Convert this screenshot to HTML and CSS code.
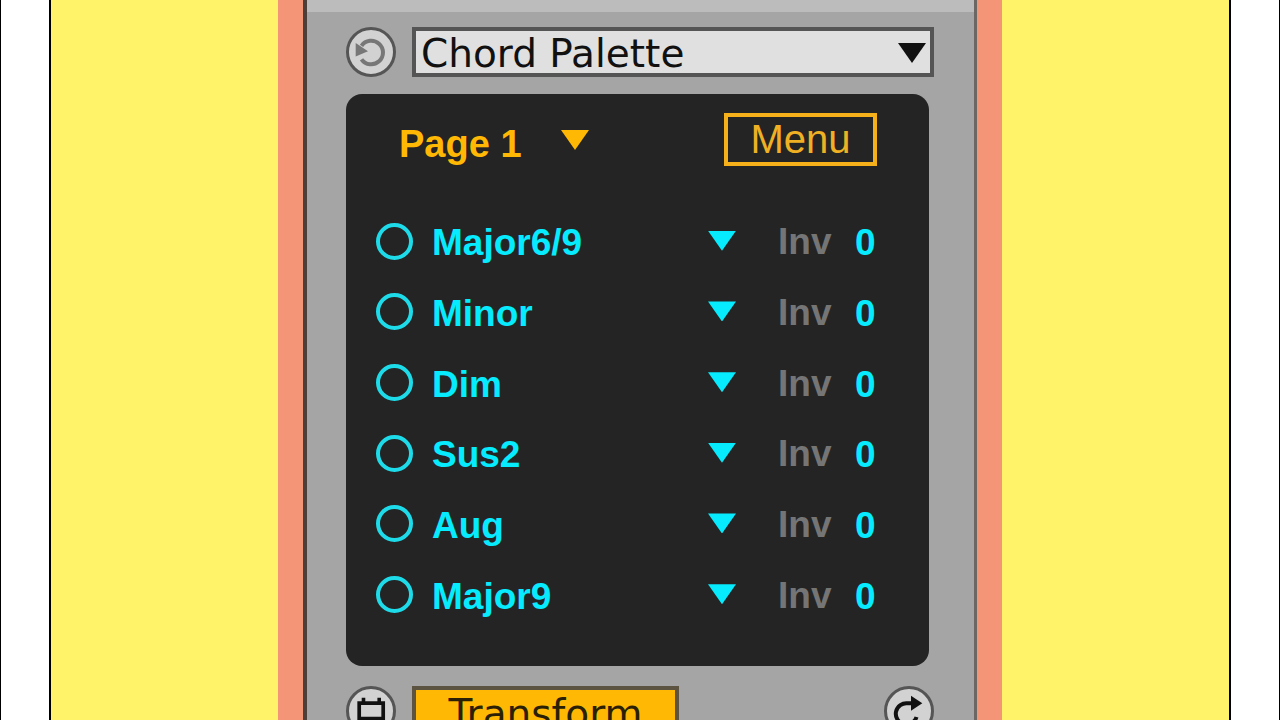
FILE: index.html
```html
<!DOCTYPE html>
<html lang="en">
<head>
<meta charset="utf-8">
<meta name="viewport" content="width=device-width, initial-scale=1">
<title>Chord Palette</title>
<link rel="stylesheet" href="styles.css">
</head>
<body>
<div class="stage">
  <main class="frame">
    <div class="device">
      <div class="titlebar"></div>
      <div class="content">
        <div class="toolbar">
          <button class="round" type="button" aria-label="Reset">
            <svg class="icon muted" viewBox="0 0 50 50" aria-hidden="true">
              <path d="M15.5 18.8A11.8 11.8 0 1 1 15.5 32.3" fill="none" stroke="currentColor" stroke-width="4"/>
              <path d="M9.7 16V29.5L22 24.3Z" fill="currentColor"/>
            </svg>
          </button>
          <div class="picker device-picker">
            <select aria-label="Device"><option>Chord Palette</option></select>
          </div>
        </div>

        <section class="panel">
          <div class="panel-head">
            <div class="picker page-picker">
              <select aria-label="Page"><option>Page 1</option></select>
            </div>
            <button class="menu" type="button">Menu</button>
          </div>
          <div class="chords">
            <div class="chord">
              <input class="dot" type="radio" name="chord" aria-label="Play Major6/9">
              <div class="picker"><select aria-label="Chord 1"><option>Major6/9</option></select></div>
              <label class="inv" for="inv1">Inv</label>
              <input class="value" id="inv1" type="text" inputmode="numeric" value="0">
            </div>
            <div class="chord">
              <input class="dot" type="radio" name="chord" aria-label="Play Minor">
              <div class="picker"><select aria-label="Chord 2"><option>Minor</option></select></div>
              <label class="inv" for="inv2">Inv</label>
              <input class="value" id="inv2" type="text" inputmode="numeric" value="0">
            </div>
            <div class="chord">
              <input class="dot" type="radio" name="chord" aria-label="Play Dim">
              <div class="picker"><select aria-label="Chord 3"><option>Dim</option></select></div>
              <label class="inv" for="inv3">Inv</label>
              <input class="value" id="inv3" type="text" inputmode="numeric" value="0">
            </div>
            <div class="chord">
              <input class="dot" type="radio" name="chord" aria-label="Play Sus2">
              <div class="picker"><select aria-label="Chord 4"><option>Sus2</option></select></div>
              <label class="inv" for="inv4">Inv</label>
              <input class="value" id="inv4" type="text" inputmode="numeric" value="0">
            </div>
            <div class="chord">
              <input class="dot" type="radio" name="chord" aria-label="Play Aug">
              <div class="picker"><select aria-label="Chord 5"><option>Aug</option></select></div>
              <label class="inv" for="inv5">Inv</label>
              <input class="value" id="inv5" type="text" inputmode="numeric" value="0">
            </div>
            <div class="chord">
              <input class="dot" type="radio" name="chord" aria-label="Play Major9">
              <div class="picker"><select aria-label="Chord 6"><option>Major9</option></select></div>
              <label class="inv" for="inv6">Inv</label>
              <input class="value" id="inv6" type="text" inputmode="numeric" value="0">
            </div>
          </div>
        </section>

        <div class="toolbar">
          <button class="round" type="button" aria-label="Clip">
            <svg class="icon" viewBox="0 0 50 50" aria-hidden="true">
              <path d="M13.2 17.2H37.2V32.5H13.2Z" fill="none" stroke="currentColor" stroke-width="3.7"/>
              <path d="M15.7 11.7h3.6v5h-3.6zM31.4 11.7h3.6v5h-3.6z" fill="currentColor"/>
            </svg>
          </button>
          <button class="transform" type="button">Transform</button>
          <button class="round last" type="button" aria-label="Apply again">
            <svg class="icon" viewBox="0 0 50 50" aria-hidden="true">
              <path d="M28 17.3H24A10.6 10.6 0 1 0 32.5 31" fill="none" stroke="currentColor" stroke-width="4"/>
              <path d="M27 9.7L38.3 17.3L27 24.7Z" fill="currentColor"/>
            </svg>
          </button>
        </div>
      </div>
    </div>
  </main>
</div>
</body>
</html>
```
FILE: styles.css
```css
* {
  box-sizing: border-box;
}

body {
  margin: 0;
  height: 100vh;
  overflow: hidden;
  padding: 0 48px;
  background: #fff;
  border: solid #000;
  border-width: 0 1px;
  font-family: "Liberation Sans", Arial, sans-serif;
  font-size: 38px;
}

button,
input,
select {
  margin: 0;
  padding: 0;
  border: 0;
  border-radius: 0;
  background: none;
  color: inherit;
  font: inherit;
  appearance: none;
}

.stage {
  min-height: 100%;
  background: #fef369;
  border: solid #000;
  border-width: 0 2px;
}

.frame {
  max-width: 724px;
  margin: 0 auto;
  padding: 0 25px;
  background: #f49577;
}

.device {
  background: #a5a5a5;
  border: solid #4b3e3b;
  border-width: 0 3px 0 4px;
  border-right-color: #6b6765;
}

.titlebar {
  height: 12px;
  background: #bcbcbc;
}

.content {
  padding: 15px 40px 24px 39px;
}

.toolbar {
  display: flex;
  gap: 16px;
}

.round {
  flex: none;
  width: 50px;
  height: 50px;
  border: 3px solid #555;
  border-radius: 50%;
  background: #d2d2d2;
  color: #111;
}

.icon {
  display: block;
  width: 50px;
  height: 50px;
  margin: -3px;
}

.muted {
  color: #777;
}

.last {
  margin-left: auto;
}

/* Drop-down: the select and its arrow share one grid cell. */
.picker {
  display: grid;
  align-items: center;
}

.picker select,
.picker::after {
  grid-area: 1 / 1;
}

.picker select {
  width: 100%;
  padding-top: 2px;
  line-height: 42px;
}

.picker::after {
  content: "";
  justify-self: end;
  width: 28px;
  height: 20px;
  margin-bottom: 3px;
  background: currentColor;
  clip-path: polygon(0 0, 100% 0, 50% 100%);
  pointer-events: none;
}

.device-picker {
  flex: 1;
  height: 50px;
  padding: 0 4px 0 5px;
  border: 4px solid #555;
  background: #e0e0e0;
  color: #111;
}

.device-picker::after {
  margin-bottom: 0;
}

.device-picker,
.transform {
  font-family: "DejaVu Sans", sans-serif;
  font-size: 39px;
}

.panel {
  margin: 17px 5px 20px 0;
  padding: 19px 52px 35px 30px;
  border-radius: 16px;
  background: #242424;
  font-weight: 700;
}

.panel-head {
  display: flex;
  justify-content: space-between;
  margin-bottom: 41px;
  padding-left: 23px;
  color: #ffb804;
}

.page-picker {
  width: 190px;
  padding-top: 6px;
}

.page-picker::after {
  margin-bottom: 5px;
}

.menu {
  width: 153px;
  height: 53px;
  border: 4px solid #f5b01a;
  color: #efb023;
  font-size: 40px;
  font-weight: 400;
}

.chords {
  display: grid;
  grid-auto-rows: 1fr;
  height: 424px;
  color: #06ebfd;
}

.chord {
  display: grid;
  grid-template-columns: 37px 1fr 77px 22px;
  align-items: center;
  font-size: 37px;
}

.dot {
  width: 37px;
  height: 37px;
  margin-bottom: 2px;
  border: 4px solid #1edbea;
  border-radius: 50%;
}

.dot:checked {
  background: #06ebfd;
}

.chord .picker {
  margin: 0 42px 0 19px;
}

.inv {
  color: #757575;
}

.value {
  width: 22px;
  padding-top: 2px;
}

.transform {
  width: 267px;
  height: 50px;
  padding-top: 3px;
  border: 4px solid #5c5340;
  background: #ffb804;
  color: #2a2005;
  line-height: 42px;
}
```
